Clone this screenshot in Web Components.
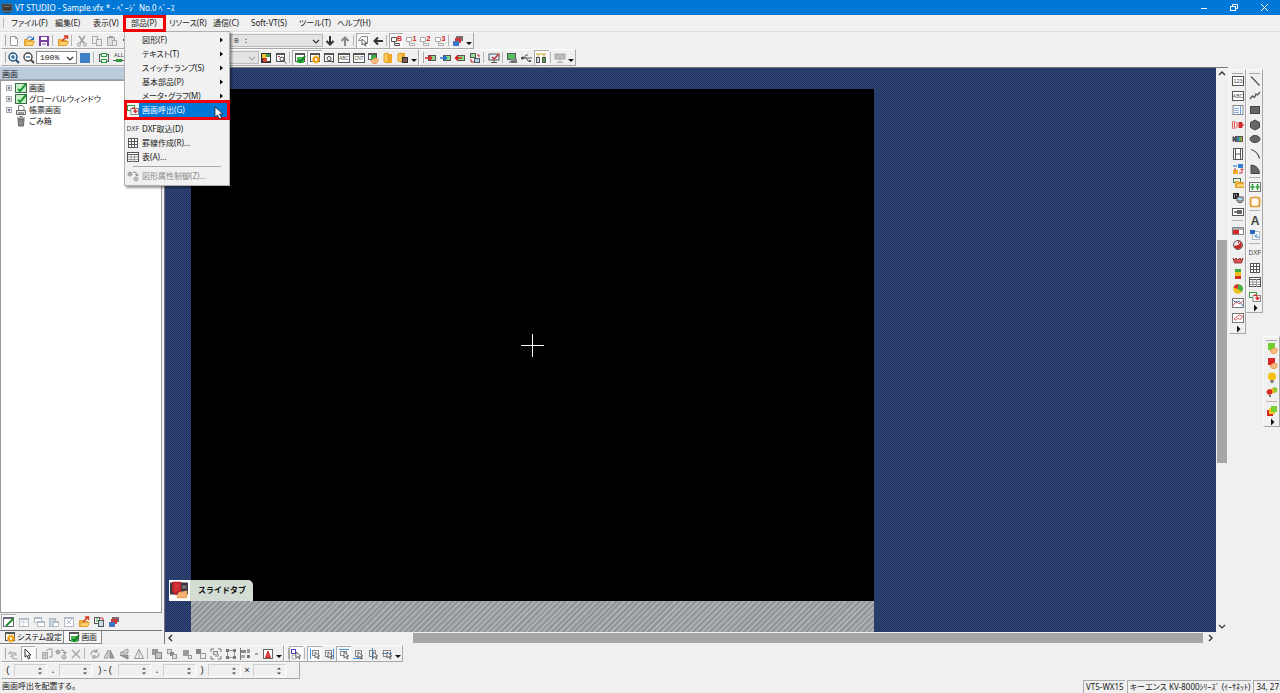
<!DOCTYPE html>
<html lang="ja">
<head>
<meta charset="utf-8">
<title>VT STUDIO</title>
<style>
html, body { height: 100%; margin: 0; }
body { font: 8px/14px "Noto Sans", "Noto Sans CJK JP", sans-serif; font-feature-settings: "palt"; color: #1a1a1a; background: #f0f0f0; overflow: hidden; }
</style>
</head>
<body>
<vt-app></vt-app>
<script>
const K = '#555', G = '#2c9c3c';
const r = (x, y, w, h, f, s = '') => `<rect x="${x}" y="${y}" width="${w}" height="${h}" fill="${f}" ${s ? `stroke="${s}"` : ''}/>`;
const p = (d, s = K, f = 'none', w = 1) => `<path d="${d}" stroke="${s}" fill="${f}" stroke-width="${w}"/>`;
const t = (s, size, x = 6, y = 8) => `<text x="${x}" y="${y}" font-size="${size}" text-anchor="middle" fill="#444" font-family="Liberation Sans, sans-serif">${s}</text>`;
const win = (x, y, c = K, w = 7, h = 5) => r(x, y, w, h, '#fff', c) + p(`M${x} ${y + 1}h${w}`, c);
const folder = (x = 0, y = 0) => `<g transform="translate(${x} ${y})">${p('M1.5 10.500V4.500h3l1 1h4v5z', '#e0a030', '#f8b840')}${p('M1.500 10.500l2-4h8l-2 4z', '#e0a030', '#ffd070')}</g>`;
const layers = r(4, 1, 7, 5, '#7a6a70') + r(3, 3, 6, 5, '#d03838') + r(1, 6, 6, 5, '#3c78c8');
const arrow = (x, y, c = '#333') => p(`M${x} ${y}v6l1.700-1.500 1.300 2.500 1-.5-1.200-2.500h2z`, c, '#fff', .7);
const mon = (x, y, c) => r(x, y, 7, 5, c, K);
const hand = p('M5 8l3-2 3 1v3l-2 1.500H6L4 9z', '#e8a060', '#f8bc80');
const ICONS = {
  app: r(1, 2, 10, 7, '#383838', '#666') + r(3, 4, 6, 1, '#777') + r(3, 10, 6, 1, '#444'),
  new: p('M2.500 1.500h5l2 2v7h-7z', '#999', '#fff') + p('M7.500 1.500v2h2', '#999'),
  open: folder() + p('M4 4c1-3 4-3 6 0M10.500 1.500v3h-3', '#1769c0'),
  save: r(1.5, 1.5, 9, 9, '#7a3fa0', '#7a3fa0') + r(3, 2, 6, 3, '#fff') + r(3, 7, 6, 4, '#fff') + p('M4 9h4', '#7a3fa0'),
  folder: folder() + p('M5 6l5-5M7 1h3.500v3', '#d83a20', 'none', 1.5),
  cut: p('M3 1l5 7M9 1L4 8', '#999', 'none', 1.400) + '<circle cx="3" cy="9.500" r="1.500" fill="none" stroke="#999"/><circle cx="9" cy="9.500" r="1.500" fill="none" stroke="#999"/>',
  copy: r(1.5, 1.5, 5, 7, '#eee', '#aaa') + r(5.5, 4.5, 5, 6, '#eee', '#aaa'),
  paste: r(1.5, 2.5, 7, 8, '#ddd', '#aaa') + r(3, 1, 4, 2, '#999') + r(6.500, 5.500, 4, 5, '#eee', '#aaa'),
  undo: p('M3 5h5a3 3 0 010 6H5', '#3868b0') + p('M5 2L2 5l3 3', '#3868b0'),
  down: p('M6 1v8M2.500 6L6 9.500 9.500 6', '#333', 'none', 2),
  up: p('M6 11V3M2.500 6L6 2.500 9.500 6', '#888', 'none', 2),
  left: p('M11 6H3M6 2.500L2.500 6 6 9.500', '#333', 'none', 2),
  selwin: p('M4.500 1.500h6v7h-3M1.500 5.500l3-4M1.500 5.500h3', '#888') + arrow(5, 4),
  zin: '<circle cx="5" cy="5" r="4" fill="#dff0ff" stroke="#24507c" stroke-width="1.400"/>' + p('M8 8l3 3', '#24507c', 'none', 2) + p('M3 5h4M5 3v4', '#24507c', 'none', 1.200),
  zout: '<circle cx="5" cy="5" r="4" fill="#fff" stroke="#444" stroke-width="1.400"/>' + p('M8 8l3 3', '#444', 'none', 2) + p('M3 5h4', '#24507c', 'none', 1.200),
  square: r(1, 1, 10, 10, '#3f7fc4'),
  onoff: p('M1 2.500h10M1 9.500h10', K) + r(3.500, 1.500, 5, 3, '#e8f8e8', G) + r(3.500, 7.500, 5, 3, '#e8f8e8', G) + p('M1.500 2.500v7M10.500 2.500v7', K),
  all: t('ALL', 5.500, 6, 5) + p('M0 8.500h3M9 8.500h3') + r(3, 7, 6, 3, G),
  pic: r(1, 1, 10, 10, '#333') + r(2, 2, 4, 4, '#f0c030') + r(6, 5, 4, 4, '#fff') + r(3, 6, 4, 4, '#d04030') + r(6, 2, 4, 3, '#40a050'),
  findwin: win(1.500, 1.500, K, 8, 8) + p('M3 4.500h2', '#d03030') + '<circle cx="7" cy="7" r="2" fill="#fff" stroke="#444"/>' + p('M8.500 8.500l3 3'),
  gwin: win(1.500, 1.500, K, 9, 8) + r(3, 5, 7, 6, '#44b850') + p('M4.500 8l2 2L11 4', '#128028', 'none', 2),
  gear: win(1.500, 1.500, K, 9, 8) + '<circle cx="7" cy="7.500" r="2.300" fill="#fff" stroke="#f0a010" stroke-width="2"/><circle cx="7" cy="7.500" r="3.700" fill="none" stroke="#f0a010" stroke-dasharray="1.500 1.400"/>',
  find: win(1.500, 1.500, K, 9, 8) + '<circle cx="6" cy="6.500" r="2" fill="#fff" stroke="#444"/>' + p('M7.500 8l3 3'),
  abcw: win(.5, 1.500, K, 11, 9) + t('ABC', 4.500, 6, 8),
  cntw: win(.5, 1.500, K, 11, 9) + t('CNT', 4.500, 6, 8),
  touch: win(1.500, 1.500, K, 8, 6) + r(4, 3, 5, 5, '#38b048') + hand,
  book: p('M2 2l4-1v10l-4-1z', '#e09a20', '#ffd060') + r(6, 2, 4, 9, '#f0a828'),
  book2: p('M1 2l4-1v9l-4-1z', '#e09a20', '#ffd060') + r(5, 1, 3, 8, '#f0a828') + r(5, 5, 6, 6, '#303030') + p('M6 7h4M6 9h4', '#c08080'),
  inR: mon(3.500, 3.500, '#8cdc8c') + p('M0 6h6M4 3.500L6.500 6 4 8.500', '#d82020', 'none', 1.600),
  inB: mon(3.500, 3.500, '#8cdc8c') + p('M0 6h6M4 3.500L6.500 6 4 8.500', '#2070c8', 'none', 1.600),
  outR: mon(3.500, 3.500, '#8cdc8c') + p('M1 6h7M4 3.500L1.500 6 4 8.500', '#d82020', 'none', 1.600),
  swap: r(1.500, 1.500, 5, 4, '#9ce09c', K) + r(5.500, 6.500, 5, 4, '#b0d0f0', K) + p('M8 3h2v2M2 7v3h3', '#c02020'),
  moncheck: r(1, 2, 10, 6, '#d8ecfa', K) + p('M6 8v2M3 10.500h6', K) + p('M4 5l2 2 5-5', '#d02828', 'none', 1.500),
  sim: r(1.500, 1.500, 8, 6, '#50c060', K) + r(5, 7, 6, 4, '#888') + p('M3 10h8', K),
  usb: p('M1 6h10M3 6l2-3h2M5 6l2 3h2') + '<circle cx="1.500" cy="6" r="1.500" fill="#444"/>' + r(8, 8, 2, 2, K),
  net: p('M1 2h10M3 2v4M9 2v4', '#d0a030') + r(1.500, 5.500, 3, 5, '#c8dcec', K) + r(7.500, 5.500, 3, 5, '#58a048', K),
  graymon: r(1, 2, 10, 5, '#bbb', '#aaa') + p('M6 7v3M3 10.500h6', '#aaa'),
  num8: wnum('B'), num1: wnum(1), num2: wnum(2), num3: wnum(3),
  layers,
  g1: p('M1 6l3-3v2h5v3M3 9l3-2v4h5', '#aaa', '#ccc'),
  cursor: p('M3 1v8l2-1.500L6.500 11 8 10 6.500 7H9z', '#333', '#fff'),
  g2: r(1.500, 4.500, 5, 6, '#ccc', '#aaa') + p('M5 3l3-2h3v8H8M3 7h2', '#999'),
  g3: '<circle cx="3" cy="4" r="2.500" fill="#aaa"/>' + p('M6 2c3 0 4 1 4 3M8 4l2 2 1.500-2', '#888') + '<circle cx="9" cy="9" r="2" fill="#ccc" stroke="#999"/>',
  x: p('M2 2l8 8M10 2l-8 8', '#aaa', 'none', 1.500),
  rot: p('M2 7a4 4 0 016-4M8 1v3H5M10 5a4 4 0 01-6 4M4 11V8h3', '#aaa', 'none', 1.300),
  mir: p('M5 10L1 10 5 2z', '#999', '#ddd') + p('M7 10h4L7 2z', '#888', '#999'),
  flip: p('M10 5H2l8-4z', '#999', '#ddd') + p('M10 7v4L2 7z', '#888', '#999'),
  tri: p('M1.500 10.500L6 1l4.500 9.500z', '#999', '#eee') + p('M6 1v10', '#aaa'),
  z1: r(1, 1, 6, 6, '#999') + r(4.500, 4.500, 6, 6, '#c4c4c4', '#888'), z2: r(1.500, 1.500, 4, 4, '#ddd', '#999') + r(4, 4, 4, 4, '#888') + r(6.500, 6.500, 4, 4, '#ddd', '#999'),
  z3: r(2, 2, 6, 6, '#999') + r(7.500, 7.500, 3, 3, '#eee', '#999'), z4: r(1, 1, 5, 5, '#888') + r(5.500, 5.500, 5, 5, '#eee', '#999'),
  grp: p('M1 1h3M8 1h3v3M11 8v3H8M4 11H1V8M1 4V1', '#777') + r(3.500, 3.500, 4, 3, '#ddd', '#888') + r(5, 6, 4, 3, '#bbb'),
  ungrp: r(2.500, 2.500, 7, 7, 'none', '#999') + r(1, 1, 3, 3, '#777') + r(8, 1, 3, 3, '#777') + r(1, 8, 3, 3, '#777') + r(8, 8, 3, 3, '#777'),
  ali: p('M1.500 0v12', '#777') + r(2, 2, 5, 3, '#888') + r(2, 7, 4, 3, '#aaa') + r(8, 1, 3, 4, '#999') + r(8, 7, 3, 3, '#777'),
  tiny: p('M4 6h3', '#555'),
  reda: r(1.500, 1.500, 9, 9, '#fff', '#666') + p('M3.500 9.500L6 3l2.500 6.500z', '#d02020', '#e05050'),
  selpurple: r(1.500, 1.500, 4, 4, '#fff', '#5a40c0') + p('M2 7h4v4H2zM6 5h2', '#aaa') + arrow(6, 4),
  s1: p('M1.500 1v10', '#4090e0') + r(3.500, 2.500, 6, 5, 'none', '#888') + arrow(6, 4), s2: p('M10.500 1v10', '#4090e0') + r(2.500, 2.500, 6, 6, 'none', '#888') + arrow(5, 4),
  s3: p('M1 1.500h10', '#4090e0') + r(2.500, 3.500, 6, 4, 'none', '#888') + arrow(6, 4), s4: p('M1 10.500h10', '#4090e0') + r(3.500, 2.500, 6, 6, 'none', '#888') + arrow(6, 4),
  s5: p('M5.500 0v12', '#4090e0') + r(2.500, 2.500, 6, 6, 'none', '#888') + arrow(6, 4), s6: p('M1 5.500h10', '#4090e0') + r(2.500, 2.500, 7, 6, 'none', '#888') + arrow(6, 4),
  n123: r(.5, 1.500, 11, 9, '#fff', K) + t('123', 5.500), nabc: r(.5, 1.500, 11, 9, '#fff', K) + t('ABC', 5),
  list: r(1, 1.500, 10, 9, '#f4f8fc', '#888') + p('M2 4.500h5M2 6.500h5M2 8.500h5', '#88b0e0') + p('M8.500 2v8', '#70a0d8'),
  alarm: p('M7 3.500v5h3v-5zM10 6h2', '#c82020', '#d83030') + p('M5 3v6M3 2q-1.500 4 0 8M1 2q-1.500 4 0 8', '#e05050'),
  cam: p('M1 3.500l2 1.500v2L1 8.500z', K, K) + r(3, 3, 8, 6, K) + r(5, 4, 2, 4, '#3a7cc8') + r(7, 4, 2, 4, '#48b050') + r(9, 4, 1, 4, '#e0a020'),
  film: r(1.500, .5, 9, 11, '#fff', K) + p('M3.500 1v10M8.500 1v10M3.500 6h5'),
  flow: r(6, 1, 5, 4, '#3080d0') + r(1, 2, 4, 2, '#80b0e0') + r(1, 7, 5, 4, '#f0b020') + p('M7 10h3V6M8.500 7L10 5.500 11.500 7M3 8V5', '#d03030'),
  foldmon: r(1.500, 1.500, 7, 4, '#e8f4e8', '#487848') + folder(2, 0),
  mon2: r(1, 1, 6, 6, '#222') + p('M2 3h1M4 3h1M2 5h1', '#fff') + r(5, 5, 6, 4, '#a8d8f8', K) + p('M6 10.500h4'),
  plug: r(.5, 2.500, 11, 7, '#fff', K) + r(5, 4, 5, 4, '#666') + p('M2 6h4', K, 'none', 1.500),
  bar: r(.5, 2.500, 11, 7, '#fff', '#888') + r(1, 3, 10, 2, '#aaa') + r(1, 5, 6, 4, '#d02828'),
  dial: '<circle cx="6" cy="6" r="4.500" fill="#f4e4e4" stroke="#555"/><path d="M6 6V2a4 4 0 11-4 5z" fill="#c82828"/>' + p('M6 6l2-3', '#fff'),
  crown: p('M1 4l1.500 2L4 4l2 2 2-2 1.500 2L11 4 9.500 9h-7z', '#904040', '#e05050'),
  traffic: r(3, 1, 6, 3, '#40a840') + r(3, 4, 6, 4, '#e8c020') + r(3, 8, 6, 3, '#d83020'),
  pie: '<circle cx="6" cy="6" r="4.800" fill="#f0c020"/><path d="M6 6V1.200A4.800 4.800 0 0110 9z" fill="#40b040"/><path d="M6 6L1.500 4.500A4.800 4.800 0 016 1.200z" fill="#d83030"/>',
  graph: r(.5, 1.500, 11, 9, '#fff', '#777') + p('M1 3l3 3 3-2 4 5', '#3878c0') + p('M1 9l3-5 3 3 4-3', '#e06060'),
  graph2: r(.5, 1.500, 11, 9, '#fff', '#777') + p('M3 8c-2-3 2-2 3-4s3 0 4 0-1 5-3 3-2 2-4 1z', '#e04848'),
  line: p('M2 1.500l8.500 9', K, 'none', 1.300), poly: p('M1 9l2.500-3 2 1.500L7 4l1.500 1L11 2', K, 'none', 1.300),
  rect: r(1.500, 2.500, 9, 7, '#666', '#444'), hex: p('M6 1l4.500 2.500v5L6 11 1.500 8.500v-5z', '#444', '#666'),
  ell: '<ellipse cx="6" cy="6" rx="5" ry="3.500" fill="#666" stroke="#444"/>', arc: p('M2 1.500q7 2 8.500 9', K, 'none', 1.300), sector: p('M2 2v8.500h8.500A8.500 8.500 0 002 2z', '#444', '#666'),
  scale: r(.5, 1.500, 11, 9, '#f4f8f4', '#777') + p('M3.500 3v6M8.500 3v6M1.500 6h4M6.500 6h4', G, 'none', 1.500),
  frame: `<rect x="1.500" y="1.500" width="9" height="9" rx="2" fill="#fff8ec" stroke="#e09830" stroke-width="1.700"/>`,
  A: t('A', 12, 6, 10.500).replace('<text', '<text font-weight="bold"'),
  docs: r(3.500, 2.500, 7, 8, '#f8fafc', '#abc') + r(1, 1, 5, 4, '#2868b8') + p('M5 7h4v2M8 5l-2 2 2 2', '#6a98d0'),
  dxf: t('DXF', 6.500),
  grid: r(1.500, 1.500, 9, 9, '#fff', K) + p('M1 4.500h10M1 7.500h10M4.500 1v10M7.500 1v10'),
  table: r(.5, 1.500, 11, 9, '#fff', K) + p('M1 3.500h10') + p('M1 6h10M1 8.500h10M4 3v8M7.500 3v8', '#999'),
  call: r(.5, 1.500, 7, 5, '#fff', '#30a040') + r(4, 4.500, 7.500, 6, '#fff', '#888') + p('M5 4c3 0 3.500 1 3.500 4M6.500 6.500l2 2 2-2', '#d82828', 'none', 1.300),
  gtouch: r(2, 1, 7, 7, '#70d030') + hand, rtouch: r(2, 1, 7, 7, '#d82828') + hand,
  bulb: '<circle cx="6" cy="4.500" r="4" fill="#f8c010"/>' + r(4.500, 8, 3, 3, '#777'),
  bulbs: '<circle cx="8.500" cy="4" r="2.800" fill="#80cc30"/><circle cx="6" cy="5" r="2.500" fill="#f0b020"/><circle cx="3.500" cy="6" r="2.800" fill="#d82828"/>' + r(3, 9, 2, 2, '#777'),
  squares: r(1, 5, 6, 6, '#d82828') + r(3, 3, 6, 6, '#f8c820') + r(5, 1, 6, 6, '#78d030'),
  greenpen: win(.5, 1.500, '#667', 10, 9) + p('M3 10l7.500-7.500', '#209038', 'none', 2),
  w1: win(1.500, 2.500, '#b0bcc8', 9, 8) + p('M1 6h10M5 3v7', '#c8d0d8'), w2: win(1.500, 1.500, '#b0bcc8') + win(4.500, 5.500, '#b0bcc8'),
  w3: r(1.500, 2.500, 6, 8, '#c8d0d8', '#b0bcc8') + win(5.500, 5.500, '#b0bcc8', 5, 5), w4: win(1.500, 1.500, '#b0bcc8', 9, 9) + p('M4 8l5-5M4 4l4 4', '#b0bcc8'),
  pages: r(1.500, 1.500, 5, 6, '#fff', K) + r(5.500, 4.500, 5, 6, '#c8dce8', K) + p('M3 3h2M3 5h2', '#30a040') + p('M7 2h3v2', '#d03030'),
  screens: r(.5, 1.500, 11, 9, '#c8f0c8', '#3a6a48') + p('M3 7l2 2 6-7', '#209838', 'none', 2),
  report: p('M3.500 6V1.500h4l1.500 2v3', '#777', '#fff') + p('M1.500 6.500h9v4h-9z', '#666', '#eee') + p('M3 9h6', '#444'),
  trash: p('M2 3h8M4.500 1.500h3', '#666') + p('M3 4h6l-.5 7h-5z', '#666', '#888'),
  drop: p('M3 7h6l-3 3z', '#111', '#111', 0), more: p('M5 2.500l3.500 3.500L5 9.500z', '#111', '#111', 0),
  min: p('M2 6.500h6', '#fff'), max: r(1.500, 4.500, 5, 4, 'none', '#fff') + p('M3.500 4V2.500h5v4H7', '#fff'), close: p('M2 2l7 7M9 2L2 9', '#fff'),
  cu: p('M3 7l3-3 3 3', '#333', 'none', 1.400), cd: p('M3 5l3 3 3-3', '#333', 'none', 1.200), cl: p('M7 3L4 6l3 3', '#333', 'none', 1.400), cr: p('M5 3l3 3-3 3', '#333', 'none', 1.400),
  spin: p('M4 4.500l2-2 2 2zM4 7.500l2 2 2-2z', '#444', '#444', 0),
  plus: r(3.500, 3.500, 5, 5, '#fff', '#aaa') + p('M4.500 6h3M6 4.500v3', '#336', 'none', .8),
  slide: r(0, 1, 12, 8, '#3a3a44') + p('M2 1h5v6H5l-1 2-2-2z', '#c02028', '#d03038') + r(8, 3, 3, 2, '#777') + p('M5 11l1-3 5-1v4z', '#f0a860', '#f4b478')
};
function wnum(n) {
  return p('M1.500 2.500h5v4h-5zM4.500 8V6.500M4.500 8.500h5v2h-5z', n === 'B' ? '#555' : '#aaa', '#fff') + `<text x="9.500" y="6" font-size="7" font-weight="bold" text-anchor="middle" fill="#d42020" font-family="Liberation Sans, sans-serif">${n}</text>`;
}
const svg = n => `<svg viewBox="0 0 12 12" aria-hidden="true">${ICONS[n] || ''}</svg>`;

const define = (name, build) => customElements.define(name, class extends HTMLElement {
  connectedCallback() {
    if (this.shadowRoot) return;
    this.attachShadow({ mode: 'open' }).innerHTML = '<style>*{box-sizing:border-box}svg{display:block;width:12px;height:12px;flex:none}button,input,select{font:inherit;font-feature-settings:inherit;color:inherit;margin:0;padding:0;border:0;background:none}</style>' + build(this);
  }
});

/* Toolbar: "|" is a separator, a "*" prefix is a pressed tool. */
define('vt-toolbar', e => {
  const v = e.hasAttribute('vertical');
  const tools = (e.getAttribute('items') || '').split(' ').filter(Boolean).map(n => {
    if (n === '|') return '<i></i>';
    const on = n[0] === '*', id = n.replace('*', '');
    const cls = [on ? 'on' : '', ['drop', 'more', 'tiny'].includes(id) ? 'slim' : ''].join(' ');
    return `<button type="button" class="${cls}" aria-label="${id}">${svg(id)}</button>`;
  }).join('');
  return `<style>
  :host{display:flex;flex-direction:${v ? 'column' : 'row'};flex:none;box-sizing:border-box;${v ? 'width:17px;padding:4px 0 0' : 'height:17px;padding:0 0 0 4px'};border:1px solid;border-color:#fcfcfc #a8a8a8 #a8a8a8 #fcfcfc;position:relative;min-width:0}
  :host([plain]){border:0;padding:0;height:15px}
  :host([plain])::before{display:none}
  :host::before{content:"";position:absolute;${v ? 'left:2px;right:2px;top:1px;height:2px;border-bottom:1px solid #aaa' : 'top:2px;bottom:2px;left:1px;width:2px;border-right:1px solid #aaa'}}
  button{flex:0 1 15px;min-width:0;min-height:0;display:flex;align-items:center;justify-content:center}
  :host([plain]) button{flex:none;width:15px}
  .slim{flex-basis:8px}
  .on{background:#fafafa;box-shadow:inset 1px 1px #aaa}
  i{flex:0 0 1px;margin:${v ? '1px 2px 2px' : '2px 2px 2px 1px'};background:#b4b4b4}
  </style><slot></slot>${tools}`;
});

define('vt-combo', e => `<style>
  :host{display:flex;position:relative;flex:none;height:13px;margin:1px 0;background:#fff;border:1px solid #8c8c8c;box-sizing:border-box}
  :host([dim]){background:#e4e4e4;border-color:#bbb}
  select{appearance:none;width:100%;padding:0 12px 0 3px;line-height:11px;font-family:"Liberation Mono",monospace}
  svg{position:absolute;right:0;top:0;pointer-events:none}
  select:disabled + svg{opacity:.3}
  </style><select aria-label="${e.getAttribute('label')}" ${e.getAttribute('value') ? '' : 'disabled'}><option>${e.getAttribute('value') || ''}</option></select>${svg('cd')}`);

define('vt-spin', e => `<style>
  :host{display:flex;position:relative;width:33px;height:13px;border:1px solid #d0d0d0;border-right-color:#fff;border-bottom-color:#fff;box-sizing:border-box}
  input{width:100%;min-width:0} svg{position:absolute;right:0;top:0}
  </style><input type="text" aria-label="${e.getAttribute('label')}">${svg('spin')}`);

define('vt-titlebar', e => `<style>
  :host{display:flex;align-items:center;height:15px;background:#0078d7;color:#fff;padding-left:1px;flex:none}
  span{flex:1;margin-left:2px} button{width:30px;height:15px;display:grid;place-items:center}
  </style>${svg('app')}<span><slot></slot></span>
  <button type="button" aria-label="最小化">${svg('min')}</button><button type="button" aria-label="元に戻す">${svg('max')}</button><button type="button" aria-label="閉じる">${svg('close')}</button>`);

const MENUS = [['ファイル(F)', 44], ['編集(E)', 38], ['表示(V)', 38], ['部品(P)', 38], ['リソース(R)', 44], ['通信(C)', 38], ['Soft-VT(S)', 48], ['ツール(T)', 38], ['ヘルプ(H)', 44]];
define('vt-menubar', e => `<style>
  :host{display:flex;height:17px;flex:none;padding-left:5px;position:relative;border-bottom:1px solid #ddd;box-sizing:border-box}
  :host::before{content:"";position:absolute;left:3px;top:3px;bottom:3px;border-left:1px solid #bbb}
  div{position:relative;display:flex} button{text-align:left;padding-left:6px;line-height:16px;white-space:nowrap;width:100%}
  .open::after{content:"";position:absolute;inset:0 -3px -1px -2px;border:3px solid #f00008;pointer-events:none;z-index:3}
  vt-menu{position:absolute;left:-1px;top:16px;z-index:2}
  </style>${MENUS.map(([n, w]) => `<div style="width:${w}px" class="${n === '部品(P)' ? 'open' : ''}"><button type="button">${n}</button>${n === '部品(P)' ? '<vt-menu></vt-menu>' : ''}</div>`).join('')}`);

define('vt-menu', e => `<style>
  :host{display:block;width:106px;background:#f1f1f1;border:1px solid #b0b0b0;box-shadow:2px 2px 2px #0006;padding:1px 0 2px;box-sizing:border-box}
  </style>
  <vt-menuitem sub>図形(F)</vt-menuitem><vt-menuitem sub>テキスト(T)</vt-menuitem><vt-menuitem sub>スイッチ・ランプ(S)</vt-menuitem><vt-menuitem sub>基本部品(P)</vt-menuitem><vt-menuitem sub>メータ・グラフ(M)</vt-menuitem>
  <vt-menuitem icon="call" hot>画面呼出(G)</vt-menuitem><vt-rule clear></vt-rule>
  <vt-menuitem icon="dxf">DXF取込(D)</vt-menuitem><vt-menuitem icon="grid">罫線作成(R)...</vt-menuitem><vt-menuitem icon="table">表(A)...</vt-menuitem><vt-rule></vt-rule>
  <vt-menuitem icon="g3" dim>図形属性制御(Z)...</vt-menuitem>`);
define('vt-rule', () => `<style>:host{display:block;height:1px;margin:2px 8px;background:#aaa}:host([clear]){background:none}</style>`);
define('vt-menuitem', e => `<style>
  :host{display:block;position:relative}
  button{display:flex;align-items:center;width:100%;height:14px;padding:0 1px 0 2px;text-align:left}
  .ic{width:12px;height:12px;flex:none} .tx{flex:1;padding-left:3px;line-height:14px;white-space:nowrap}
  :host([hot]) .tx{background:#0078d7;color:#fff} :host([dim]){color:#888}
  :host([hot])::after{content:"";position:absolute;inset:-3px -1px;border:3px solid #f00008;pointer-events:none}
  .ptr{position:absolute;right:4px;top:3px;width:12px;height:14px;z-index:2}
  </style><button type="button"><span class="ic">${svg(e.getAttribute('icon'))}</span><span class="tx"><slot></slot></span>${e.hasAttribute('sub') ? '<svg viewBox="0 0 12 12"><path d="M4 3.500l3 2.500-3 2.500z"/></svg>' : ''}</button>
  ${e.hasAttribute('hot') ? '<svg class="ptr" viewBox="0 0 12 14"><path d="M2 1v10l2.500-2 2 4 2-1-2-4H10z" fill="#fff" stroke="#222" stroke-width=".8"/></svg>' : ''}`);

define('vt-tree', () => `<style>
  :host{display:block;flex:1;background:#fff;border:1px solid #999;padding:1px 0 0 2px;min-height:0;overflow:hidden}
  ul{margin:0;padding:0;list-style:none} li{display:flex;align-items:center;height:11px;line-height:11px}
  .sp{width:12px} li span{margin-left:2px} .sel{background:#ececec}
  </style><ul>
  <li>${svg('plus')}${svg('screens')}<span class="sel">画面</span></li>
  <li>${svg('plus')}${svg('screens')}<span>グローバルウィンドウ</span></li>
  <li>${svg('plus')}${svg('report')}<span>帳票画面</span></li>
  <li><i class="sp"></i>${svg('trash')}<span>ごみ箱</span></li></ul>`);

define('vt-sidepanel', () => `<style>
  :host{display:flex;flex-direction:column;width:162px;flex:none}
  header{height:13px;line-height:13px;padding-left:2px;background:#bccbdb;border-bottom:1px solid #a0a8b0}
  vt-toolbar{margin:1px 0 1px 1px}
  nav{display:flex;height:14px;border-top:1px solid #777}
  nav button{display:flex;align-items:center;height:13px;padding:0 1px 0 4px;gap:1px;line-height:12px;white-space:nowrap;border-right:1px solid #888;border-bottom:1px solid #888}
  nav .cur{background:#f6f6f6;padding-right:4px}
  </style><header>画面</header><vt-tree></vt-tree>
  <vt-toolbar plain items="*greenpen w1 w2 w3 w4 folder pages layers"></vt-toolbar>
  <nav><button type="button">${svg('gear')}システム設定</button><button type="button" class="cur">${svg('gwin')}画面</button></nav>`);

define('vt-scroll', e => {
  const v = e.hasAttribute('vertical');
  return `<style>
  :host{display:flex;flex-direction:${v ? 'column' : 'row'};background:#f0f0f0;min-width:0;min-height:0}
  div{flex:1;display:flex;flex-direction:inherit} i:nth-child(1){flex:var(--before)} b{flex:var(--thumb);background:#a6a6a6;margin:${v ? '0 1px' : '1px 0'}} i:nth-child(3){flex:var(--after)}
  button{flex:none;display:grid;place-items:center}
  </style><button type="button" aria-label="戻る">${svg(v ? 'cu' : 'cl')}</button><div><i></i><b></b><i></i></div><button type="button" aria-label="進む">${svg(v ? 'cd' : 'cr')}</button>`;
});

define('vt-canvas', () => `<style>
  :host{display:grid;grid-template:minmax(0,1fr) 12px/minmax(0,1fr) 12px;flex:1;min-width:0;border-left:1px solid #777;border-top:1px solid #777;margin-left:2px}
  .desk{overflow:hidden;padding:21px 0 0 26px;background:repeating-conic-gradient(#22345e 0 25%,#30457a 0 50%) 0 0/2px 2px;display:flex;flex-direction:column}
  .screen{position:relative;width:683px;height:512px;flex:none;background:#000;display:grid;place-items:center}
  .screen>svg{width:24px;height:24px}
  .below{width:683px;flex:1;background:repeating-linear-gradient(135deg,#909397 0 2px,#adb0b3 2px 4px)}
  .tab{position:absolute;left:-22px;bottom:0;height:21px;display:flex;background:#d3ddd3;color:#111;font-weight:bold;font-feature-settings:normal;border-radius:0 5px 0 0;padding-right:7px;line-height:20px}
  .tab span{background:#fff;padding:1px 2px 1px 1px;margin-right:8px} .tab svg{width:18px;height:18px}
  .h{--before:236;--thumb:790;--after:1} .v{--before:160;--thumb:224;--after:157}
  </style><div class="desk"><div class="screen"><svg viewBox="0 0 24 24"><path d="M11.500 1v23M0 12.500h23" stroke="#fff"/></svg><div class="tab"><span>${svg('slide')}</span>スライドタブ</div></div><div class="below"></div></div>
  <vt-scroll vertical class="v"></vt-scroll><vt-scroll class="h"></vt-scroll>`);

define('vt-sidetools', () => `<style>
  :host{display:flex;width:52px;flex:none;align-items:flex-start;padding:2px 0 0 1px;box-sizing:border-box}
  .a{height:265px}.b{height:244px}.c{height:91px;margin-top:267px}
  </style>
  <vt-toolbar class="a" vertical items="n123 nabc list alarm cam film flow foldmon mon2 plug | bar dial crown traffic pie graph graph2 more"></vt-toolbar>
  <vt-toolbar class="b" vertical items="line poly rect hex ell arc sector | scale frame | A docs | dxf grid table call more"></vt-toolbar>
  <vt-toolbar class="c" vertical items="gtouch rtouch bulb bulbs | squares more"></vt-toolbar>`);

define('vt-coords', () => `<style>
  :host{display:flex;align-items:center;gap:4px;width:299px;height:17px;padding-left:4px;border:1px solid;border-color:#fcfcfc #a8a8a8 #a8a8a8 #fcfcfc;box-sizing:border-box;font-family:"Liberation Mono",monospace;font-size:9px;flex:none}
  span{width:4px;display:flex;justify-content:center}
  .w{width:18px}
  </style><span>(</span><vt-spin label="X1"></vt-spin><span>.</span><vt-spin label="Y1"></vt-spin><span class="w">)-(</span><vt-spin label="X2"></vt-spin><span>.</span><vt-spin label="Y2"></vt-spin><span>)</span><vt-spin label="幅"></vt-spin><span>×</span><vt-spin label="高さ"></vt-spin>`);

define('vt-status', () => `<style>
  :host{display:flex;align-items:center;gap:2px;height:14px;flex:none;padding-left:2px}
  p{flex:1;margin:0} span{border-left:1px solid #aaa;border-top:1px solid #aaa;padding:0 1px 0 2px;line-height:12px;white-space:nowrap}
  </style><p>画面呼出を配置する。</p><span>VT5-WX15</span><span>キーエンス KV-8000ｼﾘｰｽﾞ (ｲｰｻﾈｯﾄ)</span><span>34, 27</span>`);

/* Zoom controls and the language selector at the head of the second toolbar. */
define('vt-viewtools', () => `<style>
  :host{display:flex;width:253px;flex:none}.zoom{width:41px}.lang{margin-left:auto;width:100px}
  </style><vt-toolbar plain items="zin zout"></vt-toolbar><vt-combo class="zoom" label="倍率" value="100%"></vt-combo><vt-toolbar plain items="square | onoff all"></vt-toolbar><vt-combo class="lang" dim label="言語"></vt-combo>`);

define('vt-app', () => `<style>
  :host{display:flex;flex-direction:column;height:100vh}
  .bar{display:flex;height:17px;flex:none;padding-left:1px}
  .work{flex:1;display:flex;min-height:0;margin:1px 0}
  .t1{width:224px}.t2{width:249px}.t3{width:418px}.t4{width:157px}.t5{width:283px}.t6{width:119px}
  .page{width:93px}
  </style>
  <vt-titlebar>VT STUDIO - Sample.vfx * - ﾍﾟｰｼﾞ No.0 ﾍﾞｰｽ</vt-titlebar>
  <vt-menubar></vt-menubar>
  <div class="bar"><vt-toolbar class="t1" items="new open save | folder | cut copy paste undo"></vt-toolbar><vt-toolbar class="t2" items="down up | *selwin left | *num8 num1 num2 num3 | layers drop"><vt-combo class="page" dim label="ページ" value="0 :"></vt-combo></vt-toolbar></div>
  <div class="bar"><vt-toolbar class="t3" items="pic findwin | *gwin *gear find abcw cntw touch book book2 drop"><vt-viewtools></vt-viewtools></vt-toolbar><vt-toolbar class="t4" items="inR inB outR swap | moncheck | sim usb *net | graymon drop"></vt-toolbar></div>
  <div class="work"><vt-sidepanel></vt-sidepanel><vt-canvas></vt-canvas><vt-sidetools></vt-sidetools></div>
  <div class="bar"><vt-toolbar class="t5" items="g1 *cursor | g2 g3 x | rot mir flip tri | z1 z2 z3 z4 grp ungrp ali tiny reda drop"></vt-toolbar><vt-toolbar class="t6" items="*selpurple | *s1 s2 *s3 s4 s5 s6 drop"></vt-toolbar></div>
  <div class="bar"><vt-coords></vt-coords></div>
  <vt-status></vt-status>`);
</script>
</body>
</html>
